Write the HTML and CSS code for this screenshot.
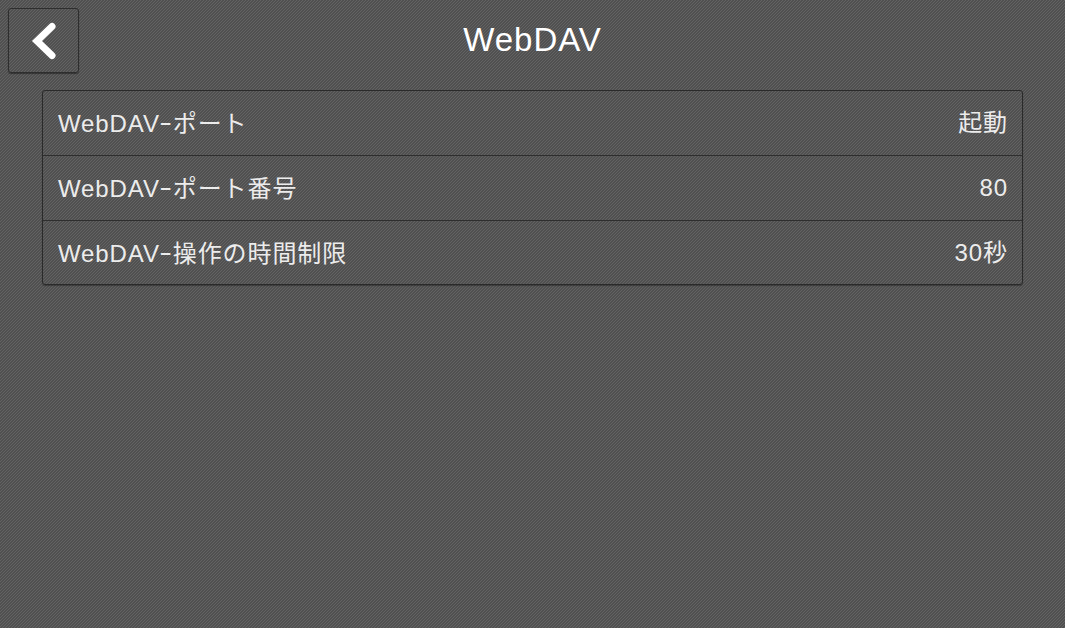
FILE: index.html
```html
<!DOCTYPE html>
<html lang="ja">
<head>
    <meta charset="UTF-8">
    <meta name="viewport" content="width=device-width, initial-scale=1.0">
    <title>WebDAV</title>
    <link rel="stylesheet" href="styles.css">
</head>
<body>
    <div class="container">
        <div class="header">
            <button class="back" type="button" aria-label="戻る">
                <svg width="28" height="38" viewBox="0 0 28 38">
                    <path d="M22 4.5 L7 19 L22 33.5" fill="none" stroke="#fff" stroke-width="7" stroke-linecap="round" stroke-linejoin="miter"/>
                </svg>
            </button>
            <h1>WebDAV</h1>
        </div>

        <ul class="list">
            <li class="row"><span>WebDAV<span class="dash">-</span>ポート</span><span>起動</span></li>
            <li class="row"><span>WebDAV<span class="dash">-</span>ポート番号</span><span>80</span></li>
            <li class="row"><span>WebDAV<span class="dash">-</span>操作の時間制限</span><span>30秒</span></li>
        </ul>
    </div>
</body>
</html>
```

FILE: styles.css
```css
html, body {
    height: 100%;
}
body {
    margin: 0;
    padding: 0;
    font-family: 'Liberation Sans', 'Noto Sans CJK JP', sans-serif;
    color: #ececec;
    background-color: #565656;
    background-image: linear-gradient(135deg, #636363 16.6%, #505050 16.6%, #505050 50%, #636363 50%, #636363 66.6%, #505050 66.6%);
    background-size: 3px 3px;
    overflow: hidden;
}
.container {
    display: flex;
    flex-direction: column;
    padding: 8px 42px 0;
}
.header {
    display: flex;
    align-items: center;
    justify-content: center;
    height: 65px;
    margin: 0 0 17px;
    position: relative;
}
.back {
    position: absolute;
    left: -34px;
    top: 0;
    width: 71px;
    height: 65px;
    padding: 0;
    display: flex;
    align-items: center;
    justify-content: center;
    background: transparent;
    border: 1px solid #2e2e2e;
    border-radius: 3px;
    box-shadow: 0 1px 1px rgba(0, 0, 0, 0.4);
}
h1 {
    margin: 0 0 2px;
    font-size: 33px;
    font-weight: 400;
    letter-spacing: 1px;
    color: #fff;
}
.list {
    list-style: none;
    margin: 0;
    padding: 0;
    width: 981px;
    box-sizing: border-box;
    border: 1px solid #2a2a2a;
    border-radius: 3px;
    box-shadow: 0 1px 1px rgba(0, 0, 0, 0.3);
}
.row {
    display: flex;
    align-items: center;
    justify-content: space-between;
    height: 65px;
    padding: 0 14px 0 15px;
    box-sizing: border-box;
    font-size: 24px;
    line-height: 34px;
    letter-spacing: 0.9px;
    border-bottom: 1px solid #2e2e2e;
}
.row:last-child {
    height: 63px;
    border-bottom: 0;
}
.dash {
    display: inline-block;
    margin: 0 2px;
    vertical-align: 2px;
    transform: scaleX(1.6);
}
```
